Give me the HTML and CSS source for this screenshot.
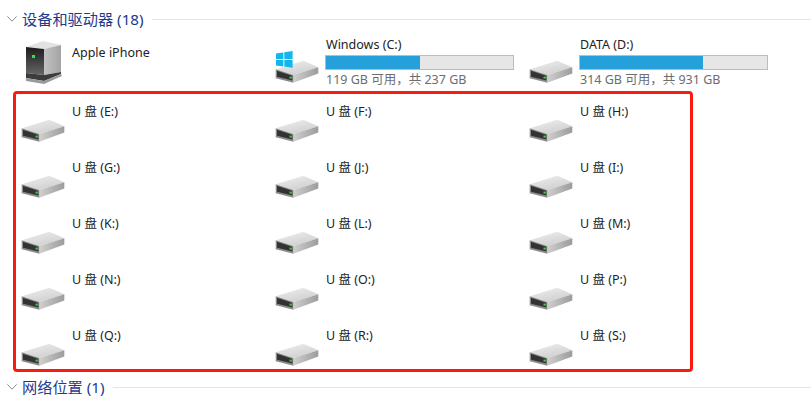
FILE: index.html
```html
<!DOCTYPE html>
<html lang="zh-CN">
<head>
    <meta charset="UTF-8">
    <title>此电脑</title>
    <link rel="stylesheet" href="styles.css">
</head>
<body>
    <svg class="defs" width="0" height="0">
        <defs>
            <linearGradient id="driveTop" x1="0" y1="0" x2="0.6" y2="1">
                <stop offset="0" stop-color="#f0f0f0"/>
                <stop offset="1" stop-color="#cfcfcf"/>
            </linearGradient>
            <linearGradient id="driveSide" x1="0" y1="0" x2="1" y2="0">
                <stop offset="0" stop-color="#cfcfcf"/>
                <stop offset="1" stop-color="#9c9c9c"/>
            </linearGradient>
            <linearGradient id="towerFront" x1="0" y1="0" x2="0" y2="1">
                <stop offset="0" stop-color="#1c1c1c"/>
                <stop offset="1" stop-color="#666666"/>
            </linearGradient>
            <linearGradient id="towerSide" x1="0" y1="0" x2="1" y2="0">
                <stop offset="0" stop-color="#c2c2c2"/>
                <stop offset="1" stop-color="#a4a4a4"/>
            </linearGradient>
            <symbol id="drive" viewBox="0 0 44 24">
                <polygon points="0.7,9.3 28.3,0.7 43.3,7.3 18.3,15" fill="url(#driveTop)"/>
                <polygon points="18.3,15 43.3,7.3 43.3,13.5 18.3,22.7" fill="url(#driveSide)"/>
                <polygon points="0.7,9.3 18.3,15 18.3,22.7 0.7,18.3" fill="#8c8c8c"/>
                <polygon points="2,10.8 17.3,15.8 17.3,20.6 2,16.8" fill="#333333"/>
                <rect x="14.5" y="16.6" width="2.4" height="2" fill="#2fd14a"/>
            </symbol>
            <symbol id="tower" viewBox="0 0 36 43">
                <polygon points="0,6 17,0 35,4 18,8" fill="#e2e2e2"/>
                <polygon points="18,8 35,4 35,31 18,34" fill="url(#towerSide)"/>
                <polygon points="0,6 18,8 18,34 0,32" fill="url(#towerFront)"/>
                <polygon points="0,32 18,34 35,31 35,33 18,40 0,37" fill="#3c3c3c"/>
                <polygon points="0,37 18,40 35,33 36,35 18,43 0,40" fill="#9a9a9a"/>
                <rect x="6" y="14" width="3" height="3" fill="#37e04c"/>
            </symbol>
            <symbol id="winLogo" viewBox="0 0 17 17">
                <polygon points="0,2.6 7.4,1.4 7.4,8 0,8" fill="#14b5ea"/>
                <polygon points="8.3,1.2 16.6,0 16.6,8 8.3,8" fill="#14b5ea"/>
                <polygon points="0,8.9 7.4,8.9 7.4,15.4 0,14.4" fill="#14b5ea"/>
                <polygon points="8.3,8.9 16.6,8.9 16.6,16.8 8.3,15.6" fill="#14b5ea"/>
            </symbol>
            <symbol id="chevron" viewBox="0 0 10 6">
                <polyline points="0.4,0.4 5,5.2 9.6,0.4" fill="none" stroke="#8a8a8a" stroke-width="1"/>
            </symbol>
        </defs>
    </svg>

    <div class="group-header">
        <svg class="chevron"><use href="#chevron"/></svg>
        <span class="group-title">设备和驱动器 (18)</span>
        <span class="group-line"></span>
    </div>

    <div class="drive-grid top-row">
        <div class="drive-item phone">
            <svg class="icon-tower"><use href="#tower"/></svg>
            <div class="drive-name">Apple iPhone</div>
        </div>
        <div class="drive-item">
            <div class="icon-wrap">
                <svg class="icon-drive"><use href="#drive"/></svg>
                <svg class="icon-win"><use href="#winLogo"/></svg>
            </div>
            <div class="drive-info">
                <div class="drive-name">Windows (C:)</div>
                <div class="usage"><div class="usage-fill" style="width: 50%"></div></div>
                <div class="drive-size">119 GB 可用，共 237 GB</div>
            </div>
        </div>
        <div class="drive-item">
            <svg class="icon-drive"><use href="#drive"/></svg>
            <div class="drive-info">
                <div class="drive-name">DATA (D:)</div>
                <div class="usage"><div class="usage-fill" style="width: 66%"></div></div>
                <div class="drive-size">314 GB 可用，共 931 GB</div>
            </div>
        </div>
    </div>

    <div class="highlight-box">
        <div class="drive-grid usb-grid">
            <div class="drive-item"><svg class="icon-drive"><use href="#drive"/></svg><div class="drive-name">U 盘 (E:)</div></div>
            <div class="drive-item"><svg class="icon-drive"><use href="#drive"/></svg><div class="drive-name">U 盘 (F:)</div></div>
            <div class="drive-item"><svg class="icon-drive"><use href="#drive"/></svg><div class="drive-name">U 盘 (H:)</div></div>
            <div class="drive-item"><svg class="icon-drive"><use href="#drive"/></svg><div class="drive-name">U 盘 (G:)</div></div>
            <div class="drive-item"><svg class="icon-drive"><use href="#drive"/></svg><div class="drive-name">U 盘 (J:)</div></div>
            <div class="drive-item"><svg class="icon-drive"><use href="#drive"/></svg><div class="drive-name">U 盘 (I:)</div></div>
            <div class="drive-item"><svg class="icon-drive"><use href="#drive"/></svg><div class="drive-name">U 盘 (K:)</div></div>
            <div class="drive-item"><svg class="icon-drive"><use href="#drive"/></svg><div class="drive-name">U 盘 (L:)</div></div>
            <div class="drive-item"><svg class="icon-drive"><use href="#drive"/></svg><div class="drive-name">U 盘 (M:)</div></div>
            <div class="drive-item"><svg class="icon-drive"><use href="#drive"/></svg><div class="drive-name">U 盘 (N:)</div></div>
            <div class="drive-item"><svg class="icon-drive"><use href="#drive"/></svg><div class="drive-name">U 盘 (O:)</div></div>
            <div class="drive-item"><svg class="icon-drive"><use href="#drive"/></svg><div class="drive-name">U 盘 (P:)</div></div>
            <div class="drive-item"><svg class="icon-drive"><use href="#drive"/></svg><div class="drive-name">U 盘 (Q:)</div></div>
            <div class="drive-item"><svg class="icon-drive"><use href="#drive"/></svg><div class="drive-name">U 盘 (R:)</div></div>
            <div class="drive-item"><svg class="icon-drive"><use href="#drive"/></svg><div class="drive-name">U 盘 (S:)</div></div>
        </div>
    </div>

    <div class="group-header second">
        <svg class="chevron"><use href="#chevron"/></svg>
        <span class="group-title">网络位置 (1)</span>
        <span class="group-line"></span>
    </div>
</body>
</html>
```

FILE: styles.css
```css
html, body {
    height: 100%;
}
body {
    margin: 0;
    padding-top: 10px;
    box-sizing: border-box;
    overflow: hidden;
    background-color: #fff;
    color: #222;
    font-family: "Noto Sans", "Noto Sans CJK SC", sans-serif;
    font-size: 12.5px;
    line-height: 18px;
}
.defs {
    position: absolute;
}
.group-header {
    display: flex;
    align-items: center;
    height: 18px;
    padding-left: 7px;
}
.group-header.second {
    margin-top: 6px;
}
.chevron {
    width: 10px;
    height: 6px;
    flex: none;
    margin-right: 5px;
}
.group-title {
    color: #1e3a8f;
    font-size: 15.2px;
    white-space: nowrap;
}
.group-line {
    flex: 1;
    height: 1px;
    margin-left: 8px;
    background-color: #e5e5e5;
}
.drive-grid {
    display: grid;
    grid-template-columns: 254px 254px 1fr;
}
.top-row {
    height: 55px;
    margin-top: 8px;
    padding-left: 21px;
}
.drive-item {
    display: flex;
    align-items: flex-start;
    column-gap: 7px;
}
.drive-name {
    white-space: nowrap;
}
.icon-drive {
    width: 44px;
    height: 24px;
    flex: none;
    margin-top: 24px;
}
.usb-grid .icon-drive {
    margin-top: 16px;
}
.icon-wrap {
    position: relative;
    width: 44px;
    height: 48px;
    flex: none;
}
.icon-win {
    position: absolute;
    top: 15px;
    left: 1px;
    width: 17px;
    height: 17px;
}
.phone {
    column-gap: 10px;
    padding-left: 5px;
}
.phone .drive-name {
    padding-top: 8px;
}
.icon-tower {
    width: 36px;
    height: 43px;
    margin-top: 5px;
    flex: none;
}
.usage {
    box-sizing: border-box;
    width: 189px;
    height: 15px;
    margin-top: 1px;
    margin-left: -1px;
    border: 1px solid #bcbcbc;
    background-color: #e6e6e6;
}
.usage-fill {
    height: 100%;
    background-color: #26a0da;
}
.drive-size {
    margin-top: 1px;
    color: #6d6d6d;
    white-space: nowrap;
}
.highlight-box {
    box-sizing: border-box;
    width: 680px;
    height: 281px;
    margin-left: 13px;
    padding: 9px 0 0 5px;
    border: 3px solid #fb1a10;
    border-radius: 4px;
}
.usb-grid {
    grid-auto-rows: 41px;
    row-gap: 15px;
}
```
